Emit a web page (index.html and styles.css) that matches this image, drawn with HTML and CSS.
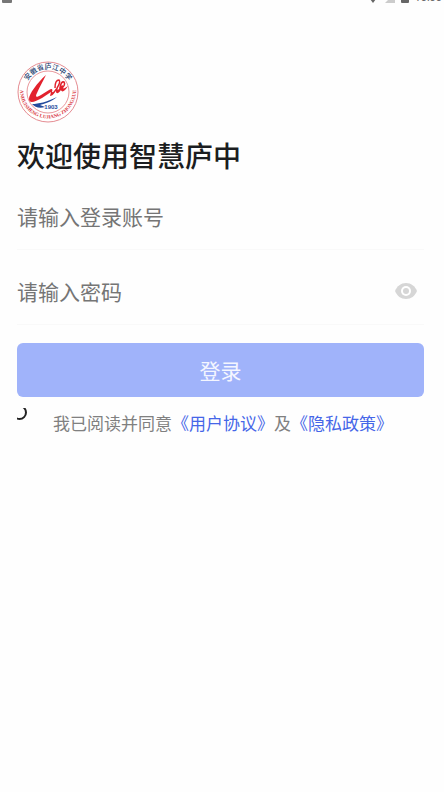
FILE: index.html
```html
<!DOCTYPE html>
<html lang="zh-CN">
<head>
    <meta charset="UTF-8">
    <meta name="viewport" content="width=device-width, initial-scale=1.0">
    <title>登录 - 智慧庐中</title>
    <link rel="stylesheet" href="styles.css">
</head>
<body>

<header class="status-bar">
    <svg class="status-icon" width="10" height="10" viewBox="0 0 10 10"><rect width="10" height="10" rx="1" fill="#777"/></svg>
    <div class="status-right">
        <svg class="status-icon" width="12" height="10" viewBox="0 0 12 10"><path d="M0 2Q6-2 12 2L6 10Z" fill="#666"/></svg>
        <svg class="status-icon" width="10" height="10" viewBox="0 0 10 10"><path d="M10 0V10H0Z" fill="#ccc"/></svg>
        <svg class="status-icon" width="8" height="10" viewBox="0 0 8 10"><rect width="8" height="10" rx="1" fill="#666"/></svg>
        <span class="clock">10:00</span>
    </div>
</header>

<main class="container">
    <svg class="logo" viewBox="0 0 62 62" role="img" aria-label="校徽">
        <defs>
            <path id="arcTop" d="M8 31A23 23 0 0 1 54 31"/>
            <path id="arcBottom" d="M4 22A28 28 0 1 0 58 22"/>
        </defs>
        <circle cx="31" cy="31" r="30" fill="#fff" stroke="#e58c92"/>
        <circle cx="31" cy="31" r="21" fill="none" stroke="#e9979b"/>
        <text class="logo-cn"><textPath href="#arcTop" startOffset="50%">安徽省庐江中学</textPath></text>
        <text class="logo-en"><textPath href="#arcBottom" startOffset="50%">ANHUISHENG LUJIANG ZHONGXUE</textPath></text>
        <path d="M29 14C20 22 12 33 12 38C12 43 18 41 25 37L34 31L33 35C36 35 37 32 39 30C39 34 42 32 44 29C45 32 48 30 51 25C48 27 47 28 46 27C47 24 45 23 43 26C41 30 40 30 41 26C38 27 37 32 35 31C36 28 35 27 32 29L24 34C19 37 18 36 20 32C22 27 26 20 29 14Z" fill="#e2222d"/>
        <path d="M38 27Q38 19 42 19Q44 21 40 27M43 27Q44 20 47 21Q49 24 44 28" fill="none" stroke="#e2222d" stroke-width="1.5"/>
        <path d="M15 43C22 43 29 41 40 36C34 41 27 43 23 44L28 46C22 48 18 46 15 43Z" fill="#234b9d"/>
        <text class="logo-year" x="34" y="48">1903</text>
    </svg>

    <h1>欢迎使用智慧庐中</h1>

    <form id="formLogin">
        <div class="field">
            <input type="text" id="account" name="account" placeholder="请输入登录账号" aria-label="登录账号">
        </div>
        <div class="field">
            <input type="password" id="password" name="password" placeholder="请输入密码" aria-label="密码">
            <button type="button" class="eye-button" aria-label="显示密码">
                <svg width="22" height="16" viewBox="0 0 22 16">
                    <path d="M11 0C6 0 2 3 0 8C2 13 6 16 11 16S20 13 22 8C20 3 16 0 11 0Z" fill="#d6d6d6"/>
                    <circle cx="11" cy="8" r="5" fill="#fff"/>
                    <circle cx="11" cy="8" r="3" fill="#d6d6d6"/>
                </svg>
            </button>
        </div>
        <button type="submit" class="login-button">登录</button>
        <div class="agreement">
            <span class="check"><input type="checkbox" id="agree" name="agree"></span>
            <p><label for="agree">我已阅读并同意</label><a href="#">《用户协议》</a>及<a href="#">《隐私政策》</a></p>
        </div>
    </form>
</main>

</body>
</html>
```
FILE: styles.css
```css
* { box-sizing: border-box; }
body { font-family: "Noto Sans CJK SC", sans-serif; background-color: #fefefe; margin: 0; }

.status-bar { display: flex; justify-content: space-between; align-items: flex-end; height: 3px; padding: 0 2px; overflow: hidden; }
.status-right { display: flex; align-items: flex-end; gap: 6px; }
.status-icon { display: block; flex-shrink: 0; }
.clock { font-family: Roboto, sans-serif; font-size: 11px; line-height: 10px; color: #666; }

.container { padding: 58px 20px 0 17px; }
.logo { display: block; width: 62px; height: 62px; }
.logo-cn { font-size: 7px; font-weight: 500; fill: #24406f; text-anchor: middle; }
.logo-en { font-family: "Liberation Serif", serif; font-size: 5px; font-weight: bold; fill: #d8323c; text-anchor: middle; }
.logo-year { font-family: "Liberation Sans", sans-serif; font-size: 6px; font-weight: bold; fill: #234b9d; text-anchor: middle; }
h1 { margin: 12px 0 0; font-size: 28px; line-height: 40px; font-weight: 500; color: #1b1d20; }

.field { display: flex; align-items: center; height: 75px; padding: 8px 7px 0 0; border-bottom: 1px solid #f9f9f9; }
.field input { flex: 1; min-width: 0; height: 40px; padding: 0; border: none; outline: none; background: transparent; font-family: inherit; font-size: 21px; color: #333; }
.field input::placeholder { color: #757575; opacity: 1; }
.eye-button { padding: 0; border: none; background: transparent; cursor: pointer; }
.eye-button svg { display: block; }

.login-button { display: block; width: 100%; height: 54px; margin-top: 18px; padding: 0; border: none; border-radius: 6px; background-color: #a0b3fa; color: #f4f6ff; font-family: inherit; font-size: 21px; cursor: pointer; }

.agreement { display: flex; align-items: flex-start; padding-top: 11px; }
/* the round tick box is cut off by its small wrapper */
.check { display: flex; justify-content: flex-end; align-items: flex-end; width: 10px; height: 12px; overflow: hidden; }
.check input { appearance: none; flex-shrink: 0; width: 15px; height: 15px; margin: 0; border: 2px solid #222; border-radius: 50%; }
.agreement p { margin: 2px 0 0 26px; font-size: 17px; line-height: 26px; color: #808080; white-space: nowrap; }
.agreement a { color: #4566e8; text-decoration: none; }
```
